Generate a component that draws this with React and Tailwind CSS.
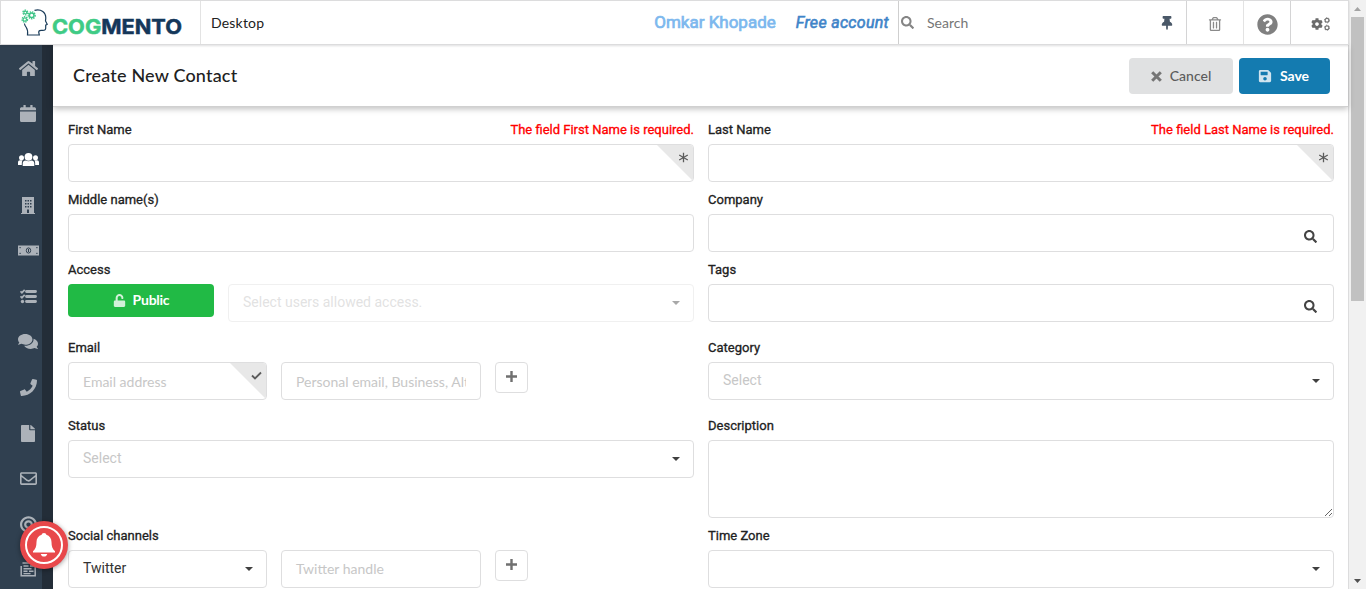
import { FaHome, FaCalendar, FaComments, FaPhone, FaFile, FaRegEnvelope, FaBullseye, FaSearch, FaThumbtack, FaRegTrashAlt, FaQuestionCircle, FaCog, FaSave, FaUnlock } from "react-icons/fa";

function UsersIcon({ className }) {
  return (
    <svg viewBox="0 0 21 15" fill="currentColor" className={className}>
      <circle cx="10.500" cy="4.800" r="3.900" />
      <path d="M4.700 14V11.500c0-2 1.300-3 2.800-3 1.700 1 4.300 1 6 0 1.500 0 2.800 1 2.800 3V14z" />
      <circle cx="3.500" cy="5.800" r="2.500" />
      <circle cx="17.500" cy="5.800" r="2.500" />
      <path d="M0 13v-2.600c0-1.500.9-2.200 2-2.200h2.700C4 9 3.800 10 3.800 13zM21 13v-2.600c0-1.500-.9-2.200-2-2.200h-2.700c.7.800.9 1.800.9 4.800z" />
    </svg>
  );
}

function BuildingIcon({ className }) {
  return (
    <svg viewBox="0 0 16 17" className={className}>
      <path d="M2 0h12v16h1v1H1v-1h1z" fill="currentColor" />
      <path d="M5 3h1.500v1.500H5zM7.500 3H9v1.500H7.500zM10 3h1.500v1.500H10zM5 6h1.500v1.500H5zM7.500 6H9v1.500H7.500zM10 6h1.500v1.500H10zM5 9h1.500v1.500H5zM7.500 9H9v1.500H7.500zM10 9h1.500v1.500H10zM7 12.500h2V16H7z" fill="#304050" />
    </svg>
  );
}

function MoneyIcon({ className }) {
  return (
    <svg viewBox="0 0 21 11" className={className}>
      <path d="M0 .5h21v10H0z" fill="currentColor" />
      <g fill="#304050">
        <rect x="1.500" y="2" width="1.200" height="1.200" />
        <rect x="18.300" y="2" width="1.200" height="1.200" />
        <rect x="1.500" y="7.800" width="1.200" height="1.200" />
        <rect x="18.300" y="7.800" width="1.200" height="1.200" />
      </g>
      <ellipse cx="10.500" cy="5.500" rx="2.200" ry="2.600" fill="none" stroke="#304050" strokeWidth="1" />
      <path d="M10.500 4v3" stroke="#304050" strokeWidth="1" />
    </svg>
  );
}

function TasksIcon({ className }) {
  return (
    <svg viewBox="0 0 17 15" className={className} fill="none" stroke="currentColor">
      <path d="M6.500 2.500H15.500M6.500 7.500H15.500M6.500 12.500H15.500" strokeWidth="2.900" strokeLinecap="round" />
      <path d="M.5 2.300l1.400 1.400L4.700.8M.5 7.300l1.400 1.400 2.800-2.900" strokeWidth="1.700" />
      <circle cx="2.500" cy="12.500" r="1.700" fill="currentColor" stroke="none" />
    </svg>
  );
}

function FormIcon({ className }) {
  return (
    <svg viewBox="0 0 16 15" className={className} fill="none" stroke="currentColor">
      <path d="M2.500 1h12.700v12.800H1.200V4" strokeWidth="1.500" />
      <path d="M3.500 4h5M10 4h4M3.500 6.700h8M3.500 9.300h4M9 9.300h4.500M3.500 11.600h7" strokeWidth="1.400" />
    </svg>
  );
}

const navItems = [
  [FaHome, "w-[19px] h-[17px]"],
  [FaCalendar, "w-[16px] h-[17px]"],
  [UsersIcon, "w-[21px] h-[15px]"],
  [BuildingIcon, "w-[16px] h-[17px]"],
  [MoneyIcon, "w-[21px] h-[11px]"],
  [TasksIcon, "w-[17px] h-[15px]"],
  [FaComments, "w-[20px] h-[17px]"],
  [FaPhone, "w-[17px] h-[17px]"],
  [FaFile, "w-[14px] h-[17px]"],
  [FaRegEnvelope, "w-[17px] h-[17px]"],
  [FaBullseye, "w-[17px] h-[17px]"],
  [FormIcon, "w-[16px] h-[15px]"],
];

function Gear({ x, y, r, hole }) {
  return (
    <>
      <circle cx={x} cy={y} r={r} strokeWidth={hole} />
      <circle cx={x} cy={y} r={r + hole / 2 + 0.4} strokeWidth="1.400" strokeDasharray="1.400 .9" />
    </>
  );
}

function Logo() {
  return (
    <svg width="164" height="34" viewBox="20 6 164 34" fill="none">
      <path d="M34.500 10.300c7-1.500 11.300 2 11.300 7.700l-.3 3 1.700 3.300-1.500.8v3.200c0 1.600-1.200 2.300-3.500 2.100-2-.2-3.500.2-3.500 1.800l.6 2.800H27.500c.4-3 .2-5.500-1.200-7.500-1-1.400-1.700-2.500-1.900-4" stroke="#1b3d5a" strokeWidth="1.200" />
      <g stroke="#3ec487">
        <Gear x={31.700} y={15.300} r={2.300} hole={1.500} />
        <Gear x={25.300} y={12.500} r={1.400} hole={1.100} />
        <Gear x={24.800} y={19.500} r={1.700} hole={1.200} />
      </g>
      <text x="52" y="34" textLength="130" lengthAdjust="spacingAndGlyphs" className="font-['Inter',sans-serif] text-[20.500px] font-bold">
        <tspan fill="#3fcb85" stroke="#3fcb85" strokeWidth=".5">COG</tspan>
        <tspan fill="#14375a" stroke="#14375a" strokeWidth=".5">MENTO</tspan>
      </text>
    </svg>
  );
}

function CogsIcon() {
  return (
    <span className="flex items-center gap-px pr-px">
      <FaCog className="size-[12px] text-[#6b6b6b]" />
      <svg viewBox="0 0 6 14" fill="none" stroke="#767676" className="h-[14px] w-[6px]">
        <circle cx="3" cy="3.300" r="1.900" strokeWidth="1.200" />
        <circle cx="3" cy="3.300" r="2.600" strokeWidth=".8" strokeDasharray="1.200 1.520" />
        <circle cx="3" cy="10.700" r="1.900" strokeWidth="1.200" />
        <circle cx="3" cy="10.700" r="2.600" strokeWidth=".8" strokeDasharray="1.200 1.520" />
      </svg>
    </span>
  );
}

function Label({ children, error }) {
  return (
    <div className="flex h-[14px] items-center justify-between text-[13px] leading-[14px] text-[#212121] [-webkit-text-stroke:0.3px_currentColor]">
      <span>{children}</span>
      {error && <span className="text-[#ff0000]">{error}</span>}
    </div>
  );
}

function Box({ className = "", children }) {
  return (
    <div className={"relative flex h-[38px] items-center overflow-hidden rounded border border-[#dededf] bg-white px-[14px] " + className}>
      {children}
    </div>
  );
}

function Corner({ check }) {
  return (
    <>
      <span className="absolute right-0 top-0 size-[36px] bg-[#e8e8e8] [clip-path:polygon(0_0,100%_0,100%_100%)]" />
      <svg viewBox="0 0 11 11" fill="none" stroke="#5c5c5c" strokeWidth={check ? 1.8 : 1.3} className="absolute right-[4px] top-[7px] size-[11px]">
        <path d={check ? "M1 5.500l3 3L10 2.500" : "M5.500.7v9.600M1.200 3l8.600 5M9.800 3L1.200 8"} />
      </svg>
    </>
  );
}

function Caret() {
  return (
    <svg viewBox="0 0 8 4" className="absolute right-[13px] top-[16px] h-[4px] w-[8px]"><path d="M0 0h8L4 4z" fill="#404040" /></svg>
  );
}

function Plus() {
  return (
    <button className="flex h-[31px] w-[33px] items-center justify-center rounded border border-[#dededf] bg-white pb-[2px] pr-px">
      <svg viewBox="0 0 11 11" className="size-[11px]"><path d="M5.500 0v11M0 5.500h11" stroke="#707070" strokeWidth="2.400" /></svg>
    </button>
  );
}

const latoHint = "whitespace-nowrap font-['Lato',sans-serif] text-[14px] text-[#c7c7c7]";
const selectHint = "pb-px text-[14px] text-[#c7c7c7]";

export default function App() {
  return (
    <div className="flex h-[589px] w-[1366px] overflow-hidden bg-white font-['Roboto',sans-serif]">
      <div className="flex w-[1349px] flex-col">
        <header className="relative z-20 flex h-[45px] shrink-0 border border-[#dcdcdd] bg-white shadow-[0_1px_2px_rgba(34,36,38,0.15)]">
          <div className="flex w-[200px] border-r border-[#e3e3e3] pl-[19px] pt-[5px]"><Logo /></div>
          <div className="flex flex-1 items-center justify-between pl-[10px] pr-[9px]">
            <span className="font-['Lato',sans-serif] text-[14px] tracking-[0.2px] text-[#212121]">Desktop</span>
            <div className="flex items-center">
              <span className="mr-[20px] pt-px text-[17px] text-[#7db8ee] [-webkit-text-stroke:0.7px_currentColor]">Omkar Khopade</span>
              <span className="text-[16px] italic tracking-[0.3px] text-[#3f84c8] [-webkit-text-stroke:0.6px_currentColor]">Free account</span>
            </div>
          </div>
          <div className="flex w-[288px] items-center border-l border-[#cfcfcf] pl-[2px]">
            <FaSearch className="size-[13px] text-[#858585]" />
            <span className="ml-[13px] font-['Lato',sans-serif] text-[14px] text-[#767676]">Search</span>
            <FaThumbtack className="ml-auto mr-[12px] size-[14px] text-[#4a5868]" />
          </div>
          <div className="flex w-[57px] items-center justify-center border-l border-[#d4d4d5] pt-[2px]"><FaRegTrashAlt className="size-[14px] text-[#8a8a8a]" /></div>
          <div className="flex w-[47px] items-center justify-center border-l border-[#e3e3e3] pt-[3px]"><FaQuestionCircle className="size-[21px] text-[#808080]" /></div>
          <div className="flex w-[58px] items-center justify-center border-l border-[#d4d4d5] pl-[3px] pt-[3px]"><CogsIcon /></div>
        </header>
        <div className="flex min-h-0 flex-1">
          <aside className="relative flex w-[53px] shrink-0 flex-col border-r-[11px] border-[#232d38] bg-[#304050]">
            {navItems.map(([Icon, size], i) => (
              <div key={i} className="flex h-[45.600px] shrink-0 items-center justify-center pl-[14px] pt-px">
                <Icon preserveAspectRatio="none" className={size + " shrink-0 " + (i === 2 ? "text-white" : "text-[#acb2b9]")} />
              </div>
            ))}
            <div className="absolute left-[20px] top-[476px] z-30 flex size-[48px] items-center justify-center rounded-full bg-[#e8484b] shadow-[0_1px_5px_rgba(0,0,0,0.4)]">
              <span className="flex size-[38px] items-center justify-center rounded-full border-2 border-white">
                <svg viewBox="0 0 24 26" fill="#fff" className="h-[26px] w-[24px]">
                  <path d="M12 1c1.400 0 2.200.8 2.300 1.800 3.300.9 5.200 3.700 5.200 7.200 0 4.500 1 7 3.500 9.200v1.300H1v-1.300C3.500 17 4.500 14.500 4.500 10c0-3.500 1.900-6.300 5.200-7.200C9.800 1.800 10.600 1 12 1zM8.700 22h6.600c-.5 1.700-1.700 2.600-3.300 2.600S9.200 23.700 8.700 22z" />
                </svg>
              </span>
            </div>
          </aside>
          <main className="flex min-w-0 flex-1 flex-col border-r border-[#dcdcdd]">
            <div className="relative z-10 flex h-[62px] shrink-0 items-center justify-between border-b border-[#d0d0d0] pl-[20px] pr-[18px] pt-px shadow-[0_2px_6px_rgba(0,0,0,0.25)]">
              <h1 className="pb-[2px] font-['Lato',sans-serif] text-[18px] font-medium tracking-[0.18px] text-[#212121]">Create New Contact</h1>
              <div className="flex gap-[6px] font-['Lato',sans-serif] text-[14px]">
                <button className="flex h-[36px] w-[104px] items-center justify-center gap-[8px] rounded bg-[#e0e1e2] font-medium text-[#5c5c5c]">
                  <svg viewBox="0 0 11 11" className="size-[11px]"><path d="M1.200 1.200l8.600 8.600M9.800 1.200L1.200 9.800" stroke="#757575" strokeWidth="3" /></svg>
                  <span className="pb-[2px]">Cancel</span>
                </button>
                <button className="flex h-[36px] w-[91px] items-center justify-center gap-[8px] rounded bg-[#147bb0] pr-[2px] font-bold text-white"><FaSave className="size-[14px] opacity-80" /><span className="pb-[2px]">Save</span></button>
              </div>
            </div>
            <div className="grid grid-cols-[626px_626px] gap-x-[14px] pl-[15px] pt-[16px]">
              <div className="flex flex-col">
                <div className="h-[70px]"><Label error="The field First Name is required.">First Name</Label><Box className="mt-[7px]"><Corner /></Box></div>
                <div className="h-[70px]"><Label>Middle name(s)</Label><Box className="mt-[7px]" /></div>
                <div className="h-[78px]"><Label>Access</Label>
                  <div className="mt-[7px] flex items-start gap-[14px]">
                    <button className="flex h-[33px] w-[146px] items-center justify-center gap-[7px] rounded bg-[#21ba45] pb-px font-['Lato',sans-serif] text-[14px] font-bold text-white"><FaUnlock className="size-[13px] opacity-80" /><span className="pb-[2px] tracking-[-0.250px]">Public</span></button>
                    <Box className="flex-1 opacity-45"><span className="pb-px text-[14px] text-[#bfbfbf]">Select users allowed access.</span><Caret /></Box>
                  </div>
                </div>
                <div className="h-[78px]"><Label>Email</Label>
                  <div className="mt-[7px] flex items-start gap-[14px]">
                    <Box className="w-[199px]"><span className={latoHint}>Email address</span><Corner check /></Box>
                    <Box className="w-[200px]"><span className={latoHint + " overflow-hidden"}>Personal email, Business, Alt</span></Box>
                    <Plus />
                  </div>
                </div>
                <div className="h-[110px]"><Label>Status</Label><Box className="mt-[7px]"><span className={selectHint}>Select</span><Caret /></Box></div>
                <div><Label>Social channels</Label>
                  <div className="mt-[7px] flex items-start gap-[14px]">
                    <Box className="w-[199px]"><span className="pb-px text-[14px] text-[#333]">Twitter</span><Caret /></Box>
                    <Box className="w-[200px]"><span className={latoHint + " pb-px"}>Twitter handle</span></Box>
                    <Plus />
                  </div>
                </div>
              </div>
              <div className="flex flex-col">
                <div className="h-[70px]"><Label error="The field Last Name is required.">Last Name</Label><Box className="mt-[7px]"><Corner /></Box></div>
                <div className="h-[70px]"><Label>Company</Label><Box className="mt-[7px]"><FaSearch className="absolute right-[16px] top-[15px] size-[13px] text-[#444]" /></Box></div>
                <div className="h-[78px]"><Label>Tags</Label><Box className="mt-[7px]"><FaSearch className="absolute right-[16px] top-[15px] size-[13px] text-[#444]" /></Box></div>
                <div className="h-[78px]"><Label>Category</Label><Box className="mt-[7px]"><span className={selectHint}>Select</span><Caret /></Box></div>
                <div className="h-[110px]"><Label>Description</Label><textarea className="mt-[7px] block h-[78px] w-full resize-y rounded border border-[#dededf]" /></div>
                <div><Label>Time Zone</Label><Box className="mt-[7px]"><Caret /></Box></div>
              </div>
            </div>
          </main>
        </div>
      </div>
      <div className="flex w-[17px] flex-col items-center justify-between bg-[#f1f1f1]">
        <div className="flex flex-col items-center">
          <svg width="13" height="17"><path d="M3 11l3.500-4 3.500 4z" fill="#a3a3a3" /></svg>
          <div className="h-[284px] w-[13px] bg-[#c1c1c1]" />
        </div>
        <svg width="13" height="17"><path d="M3 7l3.500 4L10 7z" fill="#505050" /></svg>
      </div>
    </div>
  );
}
